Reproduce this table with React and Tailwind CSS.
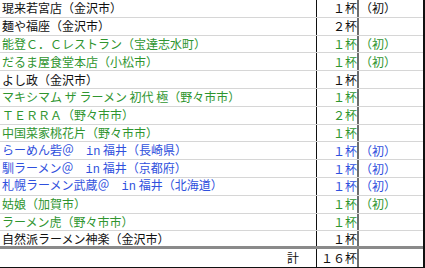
import React from 'react';

const BLACK = 'text-[#111111]';
const GREEN = 'text-[#2f952f]';
const BLUE = 'text-[#2f50dd]';

// 店名, 杯数, 初訪問, 色（ in 福井 の店は shop + pref で組む）
const rows = [
  { name: '琨来若宮店（金沢市）', count: '１杯', first: true, color: BLACK },
  { name: '麺や福座（金沢市）', count: '２杯', first: false, color: BLACK },
  { name: '能登Ｃ．Ｃレストラン（宝達志水町）', count: '１杯', first: true, color: GREEN },
  { name: 'だるま屋食堂本店（小松市）', count: '１杯', first: true, color: GREEN },
  { name: 'よし政（金沢市）', count: '１杯', first: false, color: BLACK },
  { name: 'マキシマム ザ ラーメン 初代 極（野々市市）', count: '１杯', first: false, color: GREEN },
  { name: 'ＴＥＲＲＡ（野々市市）', count: '２杯', first: false, color: GREEN },
  { name: '中国菜家桃花片（野々市市）', count: '１杯', first: false, color: GREEN },
  { shop: 'らーめん砦', pref: '長崎県', count: '１杯', first: true, color: BLUE },
  { shop: '馴ラーメン', pref: '京都府', count: '１杯', first: true, color: BLUE },
  { shop: '札幌ラーメン武蔵', pref: '北海道', count: '１杯', first: true, color: BLUE },
  { name: '姑娘（加賀市）', count: '１杯', first: true, color: GREEN },
  { name: 'ラーメン虎（野々市市）', count: '１杯', first: false, color: GREEN },
  { name: '自然派ラーメン神楽（金沢市）', count: '１杯', first: false, color: BLACK },
];

function Name({ row }) {
  if (row.name) return row.name;
  return (
    <>
      {row.shop + '＠　'}
      <span style={{ fontFamily: '"Liberation Mono", monospace' }}>in</span>
      {' 福井（' + row.pref + '）'}
    </>
  );
}

function Row({ row, last }) {
  return (
    <div
      className={`flex h-[17.8px] ${
        last ? 'border-b-[3px] border-[#8a8a8a]' : 'border-b border-[#d6d6d6]'
      } ${row.color}`}
    >
      <div className="w-[317px] border-r border-[#111111] pl-[2px] flex items-center whitespace-pre">
        <span>
          <Name row={row} />
        </span>
      </div>
      <div className="w-[42px] border-r-2 border-[#6e6e6e] flex items-center justify-end">
        {row.count}
      </div>
      <div className="flex-1 pl-[1px] flex items-center">{row.first ? '（初）' : ''}</div>
    </div>
  );
}

export default function App() {
  return (
    <div className="w-[425px] h-[268px] bg-white overflow-hidden">
      <div
        className="w-[425px] border-r-2 border-b border-[#111111] text-[12px] leading-none"
        style={{ fontFamily: '"Noto Sans CJK JP", "Noto Sans", sans-serif' }}
      >
        {rows.map((row, i) => (
          <Row key={i} row={row} last={i === rows.length - 1} />
        ))}
        {/* 合計 */}
        <div className="flex h-[18px] text-[#111111]">
          <div className="w-[317px] border-r border-[#111111] pr-[17px] flex items-center justify-end">
            計
          </div>
          <div className="w-[42px] border-r-2 border-[#6e6e6e] flex items-center justify-end">
            １６杯
          </div>
          <div className="flex-1" />
        </div>
      </div>
    </div>
  );
}
